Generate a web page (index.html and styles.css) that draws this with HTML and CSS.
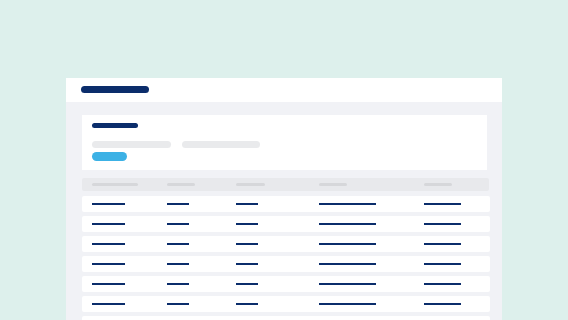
FILE: index.html
```html
<!DOCTYPE html>
<html>
<head>
<meta charset="utf-8">
<link rel="stylesheet" href="styles.css">
</head>
<body>
<div class="window">
  <div class="topbar"><span class="logo"></span></div>
  <div class="content">
    <div class="card">
      <span class="card-title"></span>
      <div class="filters">
        <span class="pill w79"></span>
        <span class="pill w78"></span>
      </div>
      <span class="btn"></span>
    </div>
    <div class="table">
      <div class="thead">
        <span class="h w46"></span><span class="h w28"></span><span class="h w29"></span><span class="h w28"></span><span class="h w28"></span>
      </div>
      <div class="row"><span class="l c1"></span><span class="l c2"></span><span class="l c3"></span><span class="l c4"></span><span class="l c5"></span></div>
      <div class="row"><span class="l c1"></span><span class="l c2"></span><span class="l c3"></span><span class="l c4"></span><span class="l c5"></span></div>
      <div class="row"><span class="l c1"></span><span class="l c2"></span><span class="l c3"></span><span class="l c4"></span><span class="l c5"></span></div>
      <div class="row"><span class="l c1"></span><span class="l c2"></span><span class="l c3"></span><span class="l c4"></span><span class="l c5"></span></div>
      <div class="row"><span class="l c1"></span><span class="l c2"></span><span class="l c3"></span><span class="l c4"></span><span class="l c5"></span></div>
      <div class="row"><span class="l c1"></span><span class="l c2"></span><span class="l c3"></span><span class="l c4"></span><span class="l c5"></span></div>
      <div class="row"><span class="l c1"></span><span class="l c2"></span><span class="l c3"></span><span class="l c4"></span><span class="l c5"></span></div>
    </div>
  </div>
</div>
</body>
</html>
```
FILE: styles.css
```css
html, body {
  margin: 0;
  height: 320px;
  overflow: hidden;
}
body {
  background: #ddf0ec;
  padding: 78px 0 0 66px;
  box-sizing: border-box;
  font-family: "Liberation Sans", sans-serif;
}
.window {
  width: 436px;
  height: 242px;
  overflow: hidden;
  background: #f1f2f6;
  display: flex;
  flex-direction: column;
}
.topbar {
  background: #ffffff;
  height: 24px;
  flex: none;
  padding: 8px 0 0 15px;
  box-sizing: border-box;
}
.logo {
  display: block;
  width: 68px;
  height: 7px;
  border-radius: 4px;
  background: #0b2d6b;
}
.content {
  padding: 13px 0 0 16px;
  display: flex;
  flex-direction: column;
}
.card {
  width: 405px;
  background: #ffffff;
  padding: 8px 10px 9px 10px;
  box-sizing: border-box;
  display: flex;
  flex-direction: column;
  align-items: flex-start;
}
.card-title {
  width: 46px;
  height: 5px;
  border-radius: 3px;
  background: #0b2d6b;
}
.filters {
  display: flex;
  gap: 11px;
  margin-top: 13px;
}
.pill {
  height: 7px;
  border-radius: 4px;
  background: #e9eaec;
}
.w79 { width: 79px; }
.w78 { width: 78px; }
.btn {
  margin-top: 4px;
  width: 35px;
  height: 9px;
  border-radius: 5px;
  background: #3cb1e5;
}
.table {
  margin-top: 8px;
  width: 408px;
  display: flex;
  flex-direction: column;
  gap: 4px;
}
.thead, .row {
  display: grid;
  grid-template-columns: 75px 69px 83px 105px 1fr;
  align-items: center;
  padding-left: 10px;
  box-sizing: border-box;
  flex: none;
}
.thead {
  width: 407px;
  height: 13px;
  background: #e8e9ec;
  border-radius: 2px;
  margin-bottom: 1px;
}
.h {
  height: 3px;
  border-radius: 2px;
  background: #d6d7da;
}
.w46 { width: 46px; }
.w28 { width: 28px; }
.w29 { width: 29px; }
.row {
  height: 16px;
  background: #ffffff;
  border-radius: 2px;
}
.l {
  height: 2.5px;
  background: #0b2d6b;
}
.c1 { width: 33px; }
.c2 { width: 22px; }
.c3 { width: 22px; }
.c4 { width: 57px; }
.c5 { width: 37px; }
```
